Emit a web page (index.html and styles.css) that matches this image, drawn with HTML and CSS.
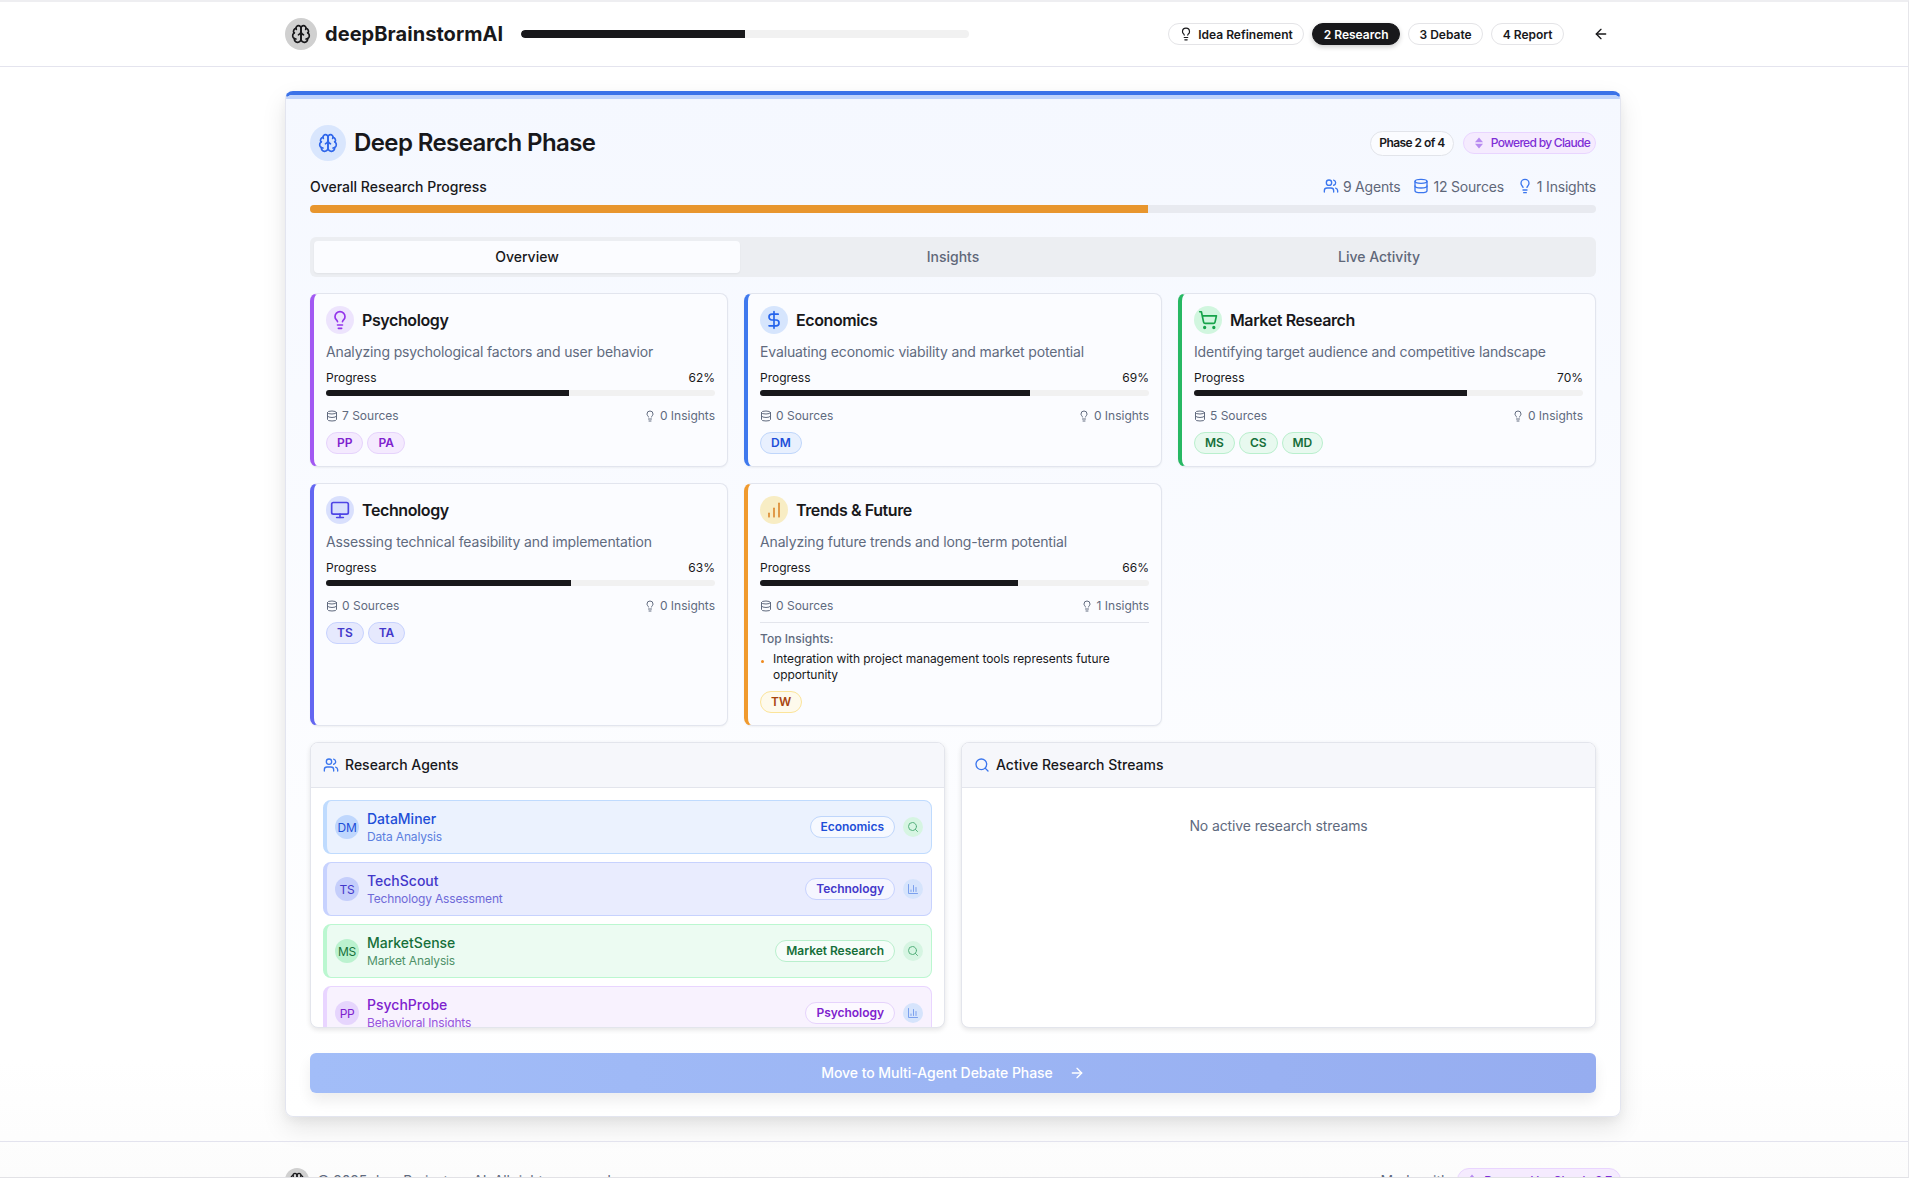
FILE: index.html
```html
<!DOCTYPE html>
<html lang="en">
<head>
<meta charset="utf-8">
<title>deepBrainstormAI</title>
<link rel="stylesheet" href="styles.css">
</head>
<body>
<svg class="sprite" xmlns="http://www.w3.org/2000/svg">
  <symbol id="i-brain" viewBox="0 0 24 24"><path d="M12 5a3 3 0 1 0-5.997.125 4 4 0 0 0-2.526 5.77 4 4 0 0 0 .556 6.588A4 4 0 1 0 12 18Z"/><path d="M12 5a3 3 0 1 1 5.997.125 4 4 0 0 1 2.526 5.77 4 4 0 0 1-.556 6.588A4 4 0 1 1 12 18Z"/><path d="M15 13a4.5 4.5 0 0 1-3-4 4.5 4.5 0 0 1-3 4"/><path d="M17.599 6.5a3 3 0 0 0 .399-1.375"/><path d="M6.003 5.125A3 3 0 0 0 6.401 6.5"/><path d="M3.477 10.896a4 4 0 0 1 .585-.396"/><path d="M19.938 10.5a4 4 0 0 1 .585.396"/><path d="M6 18a4 4 0 0 1-1.967-.516"/><path d="M19.967 17.484A4 4 0 0 1 18 18"/></symbol>
  <symbol id="i-bulb" viewBox="0 0 24 24"><path d="M15 14c.2-1 .7-1.7 1.5-2.5 1-.9 1.5-2.2 1.5-3.5A6 6 0 0 0 6 8c0 1 .2 2.2 1.5 3.5.7.7 1.3 1.5 1.5 2.5"/><path d="M9 18h6"/><path d="M10 22h4"/></symbol>
  <symbol id="i-users" viewBox="0 0 24 24"><path d="M16 21v-2a4 4 0 0 0-4-4H6a4 4 0 0 0-4 4v2"/><circle cx="9" cy="7" r="4"/><path d="M22 21v-2a4 4 0 0 0-3-3.870"/><path d="M16 3.130a4 4 0 0 1 0 7.750"/></symbol>
  <symbol id="i-db" viewBox="0 0 24 24"><ellipse cx="12" cy="5" rx="9" ry="3"/><path d="M3 5V19A9 3 0 0 0 21 19V5"/><path d="M3 12A9 3 0 0 0 21 12"/></symbol>
  <symbol id="i-dollar" viewBox="0 0 24 24"><path d="M12 2v20"/><path d="M17 5H9.500a3.500 3.500 0 0 0 0 7h5a3.500 3.500 0 0 1 0 7H6"/></symbol>
  <symbol id="i-cart" viewBox="0 0 24 24"><circle cx="8" cy="21" r="1"/><circle cx="19" cy="21" r="1"/><path d="M2.050 2.050h2l2.660 12.420a2 2 0 0 0 2 1.580h9.780a2 2 0 0 0 1.950-1.570l1.650-7.430H5.120"/></symbol>
  <symbol id="i-monitor" viewBox="0 0 24 24"><rect x="2" y="3" width="20" height="14" rx="2"/><path d="M8 21h8"/><path d="M12 17v4"/></symbol>
  <symbol id="i-bars" viewBox="0 0 24 24"><path d="M12 20V10"/><path d="M18 20V4"/><path d="M6 20v-4"/></symbol>
  <symbol id="i-chart" viewBox="0 0 24 24"><path d="M3 3v18h18"/><path d="M18 17V9"/><path d="M13 17V5"/><path d="M8 17v-3"/></symbol>
  <symbol id="i-search" viewBox="0 0 24 24"><circle cx="11" cy="11" r="8"/><path d="m21 21-4.300-4.300"/></symbol>
  <symbol id="i-left" viewBox="0 0 24 24"><path d="m12 19-7-7 7-7"/><path d="M19 12H5"/></symbol>
  <symbol id="i-right" viewBox="0 0 24 24"><path d="M5 12h14"/><path d="m12 5 7 7-7 7"/></symbol>
  <symbol id="i-spark" viewBox="0 0 24 24"><path d="M12 1l8 9.500H4z"/><path d="M12 23l-8-9.500h16z"/></symbol>
</svg>
<div class="frame">
  <header class="topbar">
    <div class="topbar-inner">
      <div class="logo"><svg class="ic ic20"><use href="#i-brain"/></svg></div>
      <div class="brand">deepBrainstormAI</div>
      <div class="top-progress"><div class="fill-dark w50"></div></div>
      <nav class="steps">
        <span class="step"><svg class="ic ic14"><use href="#i-bulb"/></svg>Idea Refinement</span>
        <span class="step step-on">2 Research</span>
        <span class="step">3 Debate</span>
        <span class="step">4 Report</span>
      </nav>
      <button class="back"><svg class="ic ic16"><use href="#i-left"/></svg></button>
    </div>
  </header>

  <main class="main">
    <section class="phase">
      <div class="band"></div>
      <div class="phase-body">
        <div class="phase-head">
          <div class="phase-icon"><svg class="ic ic20"><use href="#i-brain"/></svg></div>
          <h1 class="phase-title">Deep Research Phase</h1>
          <span class="tag-phase">Phase 2 of 4</span>
          <span class="tag-claude"><svg class="ic ic12 spark"><use href="#i-spark"/></svg>Powered by Claude</span>
        </div>
        <div class="overall-row">
          <span class="overall-label">Overall Research Progress</span>
          <span class="stat"><svg class="ic ic16"><use href="#i-users"/></svg>9 Agents</span>
          <span class="stat"><svg class="ic ic16"><use href="#i-db"/></svg>12 Sources</span>
          <span class="stat"><svg class="ic ic16"><use href="#i-bulb"/></svg>1 Insights</span>
        </div>
        <div class="overall-bar"><div class="overall-fill"></div></div>

        <div class="tabs">
          <div class="tab tab-on">Overview</div>
          <div class="tab">Insights</div>
          <div class="tab">Live Activity</div>
        </div>

        <div class="areas">
          <article class="area purple">
            <div class="area-head"><div class="area-icon"><svg class="ic ic20"><use href="#i-bulb"/></svg></div><h3>Psychology</h3></div>
            <p class="area-desc">Analyzing psychological factors and user behavior</p>
            <div class="prog-row"><span>Progress</span><span>62%</span></div>
            <div class="prog"><div class="prog-fill" style="width:62.5%"></div></div>
            <div class="meta"><span class="meta-item"><svg class="ic ic12"><use href="#i-db"/></svg>7 Sources</span><span class="meta-item"><svg class="ic ic12"><use href="#i-bulb"/></svg>0 Insights</span></div>
            <div class="badges"><span class="badge">PP</span><span class="badge">PA</span></div>
          </article>
          <article class="area blue">
            <div class="area-head"><div class="area-icon"><svg class="ic ic20"><use href="#i-dollar"/></svg></div><h3>Economics</h3></div>
            <p class="area-desc">Evaluating economic viability and market potential</p>
            <div class="prog-row"><span>Progress</span><span>69%</span></div>
            <div class="prog"><div class="prog-fill" style="width:69.5%"></div></div>
            <div class="meta"><span class="meta-item"><svg class="ic ic12"><use href="#i-db"/></svg>0 Sources</span><span class="meta-item"><svg class="ic ic12"><use href="#i-bulb"/></svg>0 Insights</span></div>
            <div class="badges"><span class="badge">DM</span></div>
          </article>
          <article class="area green">
            <div class="area-head"><div class="area-icon"><svg class="ic ic20"><use href="#i-cart"/></svg></div><h3>Market Research</h3></div>
            <p class="area-desc">Identifying target audience and competitive landscape</p>
            <div class="prog-row"><span>Progress</span><span>70%</span></div>
            <div class="prog"><div class="prog-fill" style="width:70.2%"></div></div>
            <div class="meta"><span class="meta-item"><svg class="ic ic12"><use href="#i-db"/></svg>5 Sources</span><span class="meta-item"><svg class="ic ic12"><use href="#i-bulb"/></svg>0 Insights</span></div>
            <div class="badges"><span class="badge">MS</span><span class="badge">CS</span><span class="badge">MD</span></div>
          </article>
          <article class="area indigo">
            <div class="area-head"><div class="area-icon"><svg class="ic ic20"><use href="#i-monitor"/></svg></div><h3>Technology</h3></div>
            <p class="area-desc">Assessing technical feasibility and implementation</p>
            <div class="prog-row"><span>Progress</span><span>63%</span></div>
            <div class="prog"><div class="prog-fill" style="width:63%"></div></div>
            <div class="meta"><span class="meta-item"><svg class="ic ic12"><use href="#i-db"/></svg>0 Sources</span><span class="meta-item"><svg class="ic ic12"><use href="#i-bulb"/></svg>0 Insights</span></div>
            <div class="badges"><span class="badge">TS</span><span class="badge">TA</span></div>
          </article>
          <article class="area amber">
            <div class="area-head"><div class="area-icon"><svg class="ic ic20"><use href="#i-bars"/></svg></div><h3>Trends &amp; Future</h3></div>
            <p class="area-desc">Analyzing future trends and long-term potential</p>
            <div class="prog-row"><span>Progress</span><span>66%</span></div>
            <div class="prog"><div class="prog-fill" style="width:66.3%"></div></div>
            <div class="meta"><span class="meta-item"><svg class="ic ic12"><use href="#i-db"/></svg>0 Sources</span><span class="meta-item"><svg class="ic ic12"><use href="#i-bulb"/></svg>1 Insights</span></div>
            <div class="top-insights">
              <div class="ti-head">Top Insights:</div>
              <div class="ti-item"><span class="ti-dot"></span><span>Integration with project management tools represents future opportunity</span></div>
            </div>
            <div class="badges"><span class="badge">TW</span></div>
          </article>
        </div>

        <div class="panels">
          <section class="panel">
            <div class="panel-head"><svg class="ic ic16"><use href="#i-users"/></svg>Research Agents</div>
            <div class="agents">
              <div class="agent blue">
                <div class="avatar">DM</div>
                <div class="agent-text"><div class="agent-name">DataMiner</div><div class="agent-role">Data Analysis</div></div>
                <span class="badge">Economics</span>
                <span class="status s-green"><svg class="ic ic12"><use href="#i-search"/></svg></span>
              </div>
              <div class="agent indigo">
                <div class="avatar">TS</div>
                <div class="agent-text"><div class="agent-name">TechScout</div><div class="agent-role">Technology Assessment</div></div>
                <span class="badge">Technology</span>
                <span class="status s-blue"><svg class="ic ic12"><use href="#i-chart"/></svg></span>
              </div>
              <div class="agent green">
                <div class="avatar">MS</div>
                <div class="agent-text"><div class="agent-name">MarketSense</div><div class="agent-role">Market Analysis</div></div>
                <span class="badge">Market Research</span>
                <span class="status s-green"><svg class="ic ic12"><use href="#i-search"/></svg></span>
              </div>
              <div class="agent purple">
                <div class="avatar">PP</div>
                <div class="agent-text"><div class="agent-name">PsychProbe</div><div class="agent-role">Behavioral Insights</div></div>
                <span class="badge">Psychology</span>
                <span class="status s-blue"><svg class="ic ic12"><use href="#i-chart"/></svg></span>
              </div>
            </div>
          </section>
          <section class="panel">
            <div class="panel-head"><svg class="ic ic16"><use href="#i-search"/></svg>Active Research Streams</div>
            <div class="empty">No active research streams</div>
          </section>
        </div>

        <button class="next">Move to Multi-Agent Debate Phase<svg class="ic ic16"><use href="#i-right"/></svg></button>
      </div>
    </section>
  </main>

  <footer class="foot">
    <div class="foot-inner">
      <div class="foot-logo"><svg class="ic ic16"><use href="#i-brain"/></svg></div>
      <span class="foot-text">© 2025 deepBrainstormAI. All rights reserved.</span>
      <span class="foot-made">Made with</span>
      <span class="tag-claude foot-tag"><svg class="ic ic12 spark"><use href="#i-spark"/></svg>Powered by Claude 3.7</span>
    </div>
  </footer>
</div>
</body>
</html>
```
FILE: styles.css
```css
* { box-sizing: border-box; }
html, body { margin: 0; padding: 0; background: #fff; overflow: hidden; }
body { font-family: Inter, "Liberation Sans", sans-serif; color: #18181b; height: 1180px; }
h1, h3, p { margin: 0; }
button { font: inherit; border: 0; background: none; cursor: pointer; }

.sprite { display: none; }
.ic { fill: none; stroke: currentColor; stroke-width: 2; stroke-linecap: round; stroke-linejoin: round; flex: none; display: block; }
.ic12 { width: 12px; height: 12px; }
.ic14 { width: 14px; height: 14px; }
.ic16 { width: 16px; height: 16px; }
.ic20 { width: 20px; height: 20px; }
.spark { stroke: none; fill: #b78af0; }

.frame { width: 1909px; height: 1178px; padding-right: 2px; overflow: hidden; border-top: 2px solid #eeeef1; border-right: 1px solid #e6e6ea; border-bottom: 1px solid #e2e2e6; display: flex; flex-direction: column; background: linear-gradient(#fff 90%, #fcfcfc); }

.topbar { height: 65px; border-bottom: 1px solid #e4e4ee; flex: none; margin-right: -2px; padding-right: 2px; }
.topbar-inner { width: 1400px; margin: 0 auto; padding: 0 32px; height: 64px; display: flex; align-items: center; }
.logo { width: 32px; height: 32px; border-radius: 50%; background: #d0d0d0; display: flex; align-items: center; justify-content: center; color: #18181b; }
.brand { font-size: 20px; font-weight: 700; margin-left: 8px; letter-spacing: .06px; }
.top-progress { width: 448px; height: 8px; border-radius: 4px; background: #f1f1f1; margin-left: 18px; overflow: hidden; }
.fill-dark { height: 100%; background: #18181b; border-radius: 4px 0 0 4px; }
.w50 { width: 50%; }
.steps { margin-left: auto; display: flex; gap: 8px; }
.step { height: 22px; padding: 0 10.5px; border: 1px solid #e4e4e7; border-radius: 11px; display: flex; align-items: center; gap: 5px; font-size: 12px; font-weight: 600; background: #fff; white-space: nowrap; }
.step-on { background: #18181b; border-color: #18181b; color: #fff; box-shadow: 0 2px 5px rgba(0,0,0,.2); }
.back { width: 40px; height: 36px; margin-left: 17px; display: flex; align-items: center; justify-content: center; color: #18181b; padding: 0; }

.main { width: 1400px; margin: 0 auto; padding: 24px 32px; flex: none; }
.phase { border: 1px solid #e3e5ef; border-top: 4px solid #3b72e8; border-radius: 8px; background: linear-gradient(#f5f8ff, #fff); box-shadow: 0 10px 25px rgba(0,0,0,.1), 0 4px 10px rgba(0,0,0,.04); height: 1026px; overflow: hidden; }
.band { height: 4px; background: #bfd3fb; }
.phase-body { padding: 26px 24px 24px; }
.phase-head { display: flex; align-items: center; height: 36px; }
.phase-icon { width: 36px; height: 36px; border-radius: 50%; background: #d9e6fd; color: #2f66ea; display: flex; align-items: center; justify-content: center; }
.phase-title { font-size: 24px; font-weight: 600; margin-left: 8px; margin-right: auto; letter-spacing: -.6px; line-height: 34px; }
.tag-phase { height: 25px; padding: 0 8px 1px; border: 1px solid #e2e4ea; border-radius: 13px; font-size: 12px; font-weight: 600; display: flex; align-items: center; letter-spacing: -.56px; background: #fbfcff; }
.tag-claude { height: 22px; margin-left: 9px; padding: 0 5px 1px 9px; border: 1px solid #e9d5ff; border-radius: 11px; background: #f5ebfe; color: #7e2fd6; font-size: 12px; font-weight: 500; display: flex; align-items: center; gap: 6px; letter-spacing: -.7px; white-space: nowrap; }

.overall-row { display: flex; align-items: center; gap: 13px; margin-top: 15px; height: 20px; font-size: 14px; }
.overall-label { font-weight: 500; margin-right: auto; }
.stat { display: flex; align-items: center; gap: 4px; color: #5f6779; letter-spacing: -.2px; }
.stat .ic { color: #3b76ee; }
.overall-bar { height: 8px; margin-top: 9px; background: #e8eaf0; border-radius: 4px; overflow: hidden; }
.overall-fill { height: 100%; width: 65.2%; background: #e8962e; }

.tabs { margin-top: 24px; height: 40px; padding: 4px; border-radius: 6px; background: #eceef2; display: grid; grid-template-columns: repeat(3, 1fr); }
.tab { display: flex; align-items: center; justify-content: center; padding-bottom: 1px; font-size: 14px; font-weight: 500; color: #5f6779; border-radius: 4px; }
.tab-on { background: #fbfcff; color: #18181b; box-shadow: 0 1px 2px rgba(0,0,0,.05); }

.areas { margin-top: 16px; display: grid; grid-template-columns: repeat(3, 1fr); gap: 16px; }
.area { border: 1px solid #e2e5ee; border-left: 4px solid var(--c); border-radius: 8px; padding: 12px; background: #fbfcff; box-shadow: 0 1px 2px rgba(0,0,0,.05); }
.area-head { display: flex; align-items: center; gap: 8px; height: 28px; }
.area-head h3 { font-size: 16px; font-weight: 600; letter-spacing: -.4px; padding-bottom: 1px; }
.area-icon { width: 28px; height: 28px; border-radius: 50%; background: var(--ibg); color: var(--ic); display: flex; align-items: center; justify-content: center; }
.area-desc { margin-top: 8px; font-size: 14px; line-height: 20px; color: #606a7e; letter-spacing: -.14px; }
.prog-row { margin-top: 8px; display: flex; justify-content: space-between; font-size: 12px; line-height: 16px; }
.prog { margin-top: 4px; height: 6px; background: #f1f1f1; border-radius: 3px; overflow: hidden; }
.prog-fill { height: 100%; background: #18181b; }
.meta { margin-top: 12px; display: flex; justify-content: space-between; font-size: 12px; line-height: 16px; color: #606a7e; }
.meta-item { display: flex; align-items: center; gap: 4px; }
.badges { margin-top: 8px; display: flex; gap: 4px; }
.badge { height: 22px; padding: 0 10px 1px; border: 1px solid var(--bb); border-radius: 11px; background: var(--bbg); color: var(--bt); font-size: 12px; font-weight: 600; display: inline-flex; align-items: center; white-space: nowrap; }

.top-insights { margin-top: 8px; padding-top: 8px; border-top: 1px solid #e3e5ec; }
.ti-head { font-size: 12px; line-height: 16px; font-weight: 500; color: #606a7e; }
.ti-item { margin-top: 4px; display: flex; gap: 9px; font-size: 12px; line-height: 16px; letter-spacing: -.06px; }
.ti-dot { width: 3px; height: 3px; border-radius: 50%; background: #ef8a1e; margin: 9px 0 0 1px; flex: none; }

.purple { --c: #a259f2; --ibg: #ede4fd; --ic: #9333ea; --bb: #e6d3fc; --bbg: #f4eafe; --bt: #7e22ce; --abg: #f8f2fe; --ab: #e9d5ff; --av: #e6d5fd; --sub: #9654dc; }
.blue { --c: #3f79ee; --ibg: #d6e5fd; --ic: #2563eb; --bb: #bfd6fb; --bbg: #e8f0fe; --bt: #1d4ed8; --abg: #ebf2fe; --ab: #bfdbfe; --av: #bfd7fd; --sub: #5b7fe0; }
.green { --c: #27b863; --ibg: #d1f6df; --ic: #16a34a; --bb: #b9efcd; --bbg: #e8f9ef; --bt: #166f3a; --abg: #ecfbf2; --ab: #bbf7d0; --av: #bbf2cf; --sub: #4e9168; }
.indigo { --c: #6366f1; --ibg: #d9e0fd; --ic: #4f46e5; --bb: #c7d2fe; --bbg: #e6e9fd; --bt: #4338ca; --abg: #e9ecfe; --ab: #c7d2fe; --av: #c5cefb; --sub: #6e69d8; }
.amber { --c: #f09a2e; --ibg: #f8edc4; --ic: #dc8a32; --bb: #fbe49a; --bbg: #fefaec; --bt: #a8440f; }

.panels { margin-top: 16px; display: grid; grid-template-columns: 1fr 1fr; gap: 16px; }
.panel { height: 286px; border: 1px solid #e3e5ec; border-radius: 8px; background: #fff; overflow: hidden; box-shadow: 0 2px 5px rgba(0,0,0,.1); }
.panel-head { height: 45px; padding: 0 12px 1px; background: #f6f7fb; border-bottom: 1px solid #e3e5ec; display: flex; align-items: center; gap: 6px; font-size: 14px; font-weight: 500; }
.panel-head .ic { color: #3b76ee; }
.agents { padding: 12px; display: flex; flex-direction: column; gap: 8px; }
.agent { height: 54px; flex: none; display: flex; align-items: center; padding: 0 8px; border: 1px solid var(--ab); border-left-width: 4px; border-radius: 8px; background: var(--abg); }
.avatar { width: 24px; height: 24px; border-radius: 50%; background: var(--av); color: var(--bt); font-size: 12px; display: flex; align-items: center; justify-content: center; letter-spacing: -.3px; }
.agent-text { margin-left: 8px; margin-right: auto; }
.agent-name { font-size: 14px; line-height: 20px; font-weight: 500; color: var(--bt); }
.agent-role { font-size: 12px; line-height: 16px; color: var(--sub); letter-spacing: -.15px; }
.agent .badge { background: rgba(255,255,255,.55); letter-spacing: -.03px; }
.status { width: 20px; height: 20px; margin-left: 8px; border-radius: 50%; display: flex; align-items: center; justify-content: center; }
.s-green { background: #d6f5e2; color: #55b07c; }
.s-blue { background: #d6e4fc; color: #7ba0ee; }
.empty { padding-top: 28px; text-align: center; font-size: 14px; line-height: 20px; color: #606a7e; letter-spacing: -.12px; }

.next { margin-top: 25px; width: 100%; height: 40px; border-radius: 6px; background: linear-gradient(90deg, #a2bdf8, #96adf0); color: #fff; font-size: 14px; font-weight: 500; display: flex; align-items: center; justify-content: center; gap: 16px; box-shadow: 0 8px 14px rgba(0,0,0,.07); padding: 0 0 1px; letter-spacing: -.05px; }

.foot { border-top: 1px solid #e3e3ee; flex: none; height: 70px; margin-right: -2px; padding-right: 2px; }
.foot-inner { width: 1400px; margin: 0 auto; padding: 26px 32px 0; display: flex; align-items: center; }
.foot-logo { width: 24px; height: 24px; border-radius: 50%; background: #d0d0d0; display: flex; align-items: center; justify-content: center; }
.foot-text { margin-left: 8px; margin-right: auto; font-size: 14px; color: #606a7e; letter-spacing: -.2px; }
.foot-made { font-size: 14px; color: #606a7e; }
.foot-tag { margin-left: 8px; height: 24px; border-radius: 12px; padding: 0 8px; letter-spacing: -.2px; }
```
